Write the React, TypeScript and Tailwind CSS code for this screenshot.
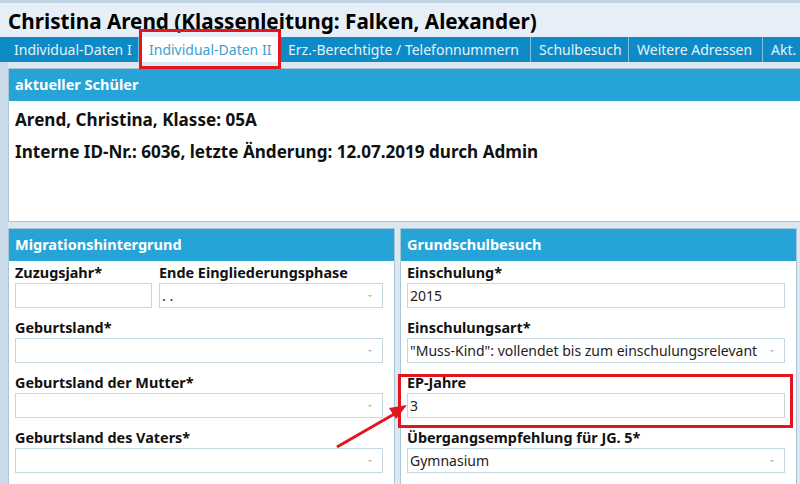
import { ReactNode } from "react"

const tabs = [
  { label: "Individual-Daten I", w: "w-[139px]", pl: "pl-[14px]" },
  { label: "Individual-Daten II", w: "w-[139px]", pl: "pl-[8px]", active: true },
  { label: "Erz.-Berechtigte / Telefonnummern", w: "w-[253px]", pl: "pl-[10px]" },
  { label: "Schulbesuch", w: "w-[98px]", pl: "pl-[8px]" },
  { label: "Weitere Adressen", w: "w-[134px]", pl: "pl-[8px]" },
  { label: "Akt.", w: "w-[60px]", pl: "pl-[8px]" },
]

function Caret() {
  return (
    <svg width="6" height="4" viewBox="0 0 6 4" className="shrink-0">
      <path d="M1.5 1 L3 2.5 L4.5 1" fill="none" stroke="#8a8f94" strokeWidth="1" />
    </svg>
  )
}

function Field({ label, value, select, className }: { label: string; value?: string; select?: boolean; className?: string }) {
  return (
    <div className={"flex flex-col " + (className ?? "")}>
      <div className="h-[20px] leading-[20px] text-[14.4px] font-bold text-[#111] whitespace-nowrap">{label}</div>
      <div className="h-[25px] border border-[#c5d8e2] bg-white flex items-center pl-[2px] pr-[9px] text-[14px] text-[#222]">
        <span className="flex-1 whitespace-nowrap overflow-hidden">{value}</span>
        {select && <Caret />}
      </div>
    </div>
  )
}

function Panel({ title, children, className }: { title: string; children: ReactNode; className?: string }) {
  return (
    <div className={"border border-[#a9c6d6] bg-white flex flex-col " + (className ?? "")}>
      <div className="h-[32px] bg-[#27a4d7] text-white font-bold text-[14.5px] flex items-center pl-[6px]">{title}</div>
      {children}
    </div>
  )
}

export default function App() {
  return (
    <div
      className="relative w-[800px] h-[484px] overflow-hidden bg-[#dbe8f2]"
      style={{ fontFamily: "'Noto Sans', 'Open Sans', sans-serif" }}
    >
      <div className="h-[37px] border-t-[3px] border-[#c3d6e5] bg-[#e6eef7] pl-[8px] pt-[4px]">
        <h1 className="text-[20.7px] leading-[28px] font-bold text-black whitespace-nowrap">
          Christina Arend (Klassenleitung: Falken, Alexander)
        </h1>
      </div>

      <div className="flex h-[25px] bg-[#0e8ac6] overflow-hidden">
        {tabs.map((t) => (
          <div
            key={t.label}
            className={
              "shrink-0 flex items-center text-[14px] whitespace-nowrap " +
              t.w +
              " " +
              t.pl +
              (t.active ? " bg-white text-[#3d9fcf] ml-[2px] mr-[-2px]" : " text-[#e3f2fa] border-r border-[#7fc2e4]")
            }
          >
            {t.label}
          </div>
        ))}
      </div>

      <div className="flex bg-[#dbe8f2] h-[422px]">
        <div className="w-[8px] bg-[#c9dbe8] shrink-0" />
        <div className="flex-1 flex flex-col pt-[6px]">
          <Panel title="aktueller Schüler" className="mr-[-2px]">
            <div className="h-[120px] px-[6px] pt-[3px] text-[17.1px] font-bold text-[#111]">
              <div className="h-[32px] leading-[32px]">Arend, Christina, Klasse: 05A</div>
              <div className="h-[32px] leading-[32px]">Interne ID-Nr.: 6036, letzte Änderung: 12.07.2019 durch Admin</div>
            </div>
          </Panel>

          <div className="flex gap-[5px] mt-[6px] flex-1">
            <Panel title="Migrationshintergrund" className="w-[387px] shrink-0 h-[260px]">
              <div className="flex flex-col gap-[10px] pl-[6px] pr-[11px] pt-[2px]">
                <div className="flex gap-[7px]">
                  <Field label="Zuzugsjahr*" className="w-[137px]" />
                  <Field label="Ende Eingliederungsphase" value="  .  ." select className="flex-1" />
                </div>
                <Field label="Geburtsland*" select />
                <Field label="Geburtsland der Mutter*" select />
                <Field label="Geburtsland des Vaters*" select />
              </div>
            </Panel>
            <Panel title="Grundschulbesuch" className="w-[397px] shrink-0 h-[260px]">
              <div className="flex flex-col gap-[10px] pl-[6px] pr-[11px] pt-[2px]">
                <Field label="Einschulung*" value="2015" />
                <Field label="Einschulungsart*" value={'"Muss-Kind": vollendet bis zum einschulungsrelevant'} select />
                <Field label="EP-Jahre" value="3" />
                <Field label="Übergangsempfehlung für JG. 5*" value="Gymnasium" select />
              </div>
            </Panel>
          </div>
        </div>
      </div>

      {/* annotations */}
      <div className="absolute left-[139px] top-[29px] w-[142px] h-[40px] border-[3px] border-[#e3151f]" />
      <div className="absolute left-[398px] top-[374px] w-[395px] h-[54px] border-[3px] border-[#e3151f]" />
      <svg className="absolute left-0 top-0" width="800" height="484">
        <line x1="337" y1="447" x2="396" y2="413" stroke="#e3151f" strokeWidth="3" />
        <polygon points="407,405 389,408 396,419" fill="#e3151f" />
      </svg>
    </div>
  )
}
